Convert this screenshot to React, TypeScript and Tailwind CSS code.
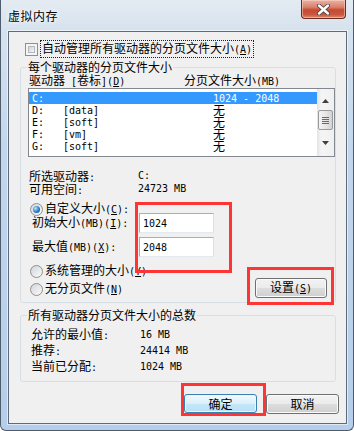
import React from "react";

// splits text into CJK / latin runs so latin gets the narrow mono look; "&X" = access key underline
function Txt({ s }: { s: string }) {
  const runs = s.match(/[\x00-\xff]+|[^\x00-\xff]+/g) ?? [];
  return (
    <>
      {runs.map((r, i) => {
        if (!/^[\x00-\xff]/.test(r)) return <span key={i}>{r}</span>;
        const bits = r.split(/&(.)/);
        return (
          <span key={i} className="font-['DejaVu_Sans_Mono',monospace] text-[10px]">
            {bits.map((b, j) =>
              j % 2 ? (
                <span key={j} className="underline underline-offset-[1px]">
                  {b}
                </span>
              ) : (
                b
              )
            )}
          </span>
        );
      })}
    </>
  );
}

function Checkbox() {
  return (
    <span className="box-border block h-[13px] w-[13px] shrink-0 border border-[#8f8f8f] bg-[#f4f4f4] p-[2px]">
      <span className="block h-full w-full border border-[#b4b9bf] bg-[linear-gradient(135deg,#cdd1d6,#f7f7f7)]" />
    </span>
  );
}

function Radio({ on }: { on?: boolean }) {
  return (
    <span className="box-border flex h-[13px] w-[13px] shrink-0 items-center justify-center rounded-full border border-[#8f8f8f] bg-[linear-gradient(135deg,#d2d4d8,#fbfbfb)]">
      {on && (
        <span className="block h-[7px] w-[7px] rounded-full bg-[radial-gradient(circle_at_35%_35%,#bfe4fc,#2b7cc6_55%,#0f4a8a)]" />
      )}
    </span>
  );
}

function Btn({ label, primary, w }: { label: string; primary?: boolean; w: string }) {
  return (
    <div
      className={
        primary
          ? `box-border flex h-[19px] ${w} items-center justify-center rounded-[3px] border border-[#3c7fb1] bg-[linear-gradient(to_bottom,#f1f9fe_0%,#dcf0fb_50%,#c6e6f8_51%,#b9e0f5_100%)] shadow-[inset_0_0_0_1px_#e9f6fe]`
          : `box-border flex h-[20px] ${w} items-center justify-center rounded-[3px] border border-[#707070] bg-[linear-gradient(to_bottom,#f2f2f2_0%,#ebebeb_50%,#dddddd_51%,#cfcfcf_100%)] shadow-[inset_0_0_0_1px_#fbfbfb]`
      }
    >
      <span className="leading-[14px]">
        <Txt s={label} />
      </span>
    </div>
  );
}

const drives = [
  { d: "C:", label: "", size: "1024 - 2048", sel: true },
  { d: "D:", label: "[data]", size: "无" },
  { d: "E:", label: "[soft]", size: "无" },
  { d: "F:", label: "[vm]", size: "无" },
  { d: "G:", label: "[soft]", size: "无" },
];

function DriveList() {
  return (
    <div className="ml-[7px] box-border flex h-[69px] w-[307px] border border-[#828790] bg-white">
      <div className="flex-1 pt-[3px]">
        {drives.map((r) => (
          <div
            key={r.d + r.label}
            className={`flex h-[12px] items-center pl-[3px] leading-[12px] ${r.sel ? "bg-[#3399ff] text-white" : ""}`}
          >
            <span className="w-[31px]">
              <Txt s={r.d} />
            </span>
            <span className="w-[150px]">
              <Txt s={r.label} />
            </span>
            <span>
              <Txt s={r.size} />
            </span>
          </div>
        ))}
      </div>
      <div className="flex w-[17px] flex-col items-center bg-[linear-gradient(to_right,#e3e3e3,#f5f5f5_25%,#f0f0f0)] pt-[10px]">
        <svg width="7" height="4" viewBox="0 0 7 4">
          <path d="M3.5 0 L7 4 L0 4 Z" fill="#404040" />
        </svg>
        <div className="mt-[7px] box-border flex h-[20px] w-[15px] flex-col items-center justify-center gap-[1px] rounded-[2px] border border-[#9a9a9a] bg-[linear-gradient(to_right,#f4f4f4,#e6e6e6_50%,#d4d4d4)]">
          <span className="block h-px w-[7px] bg-[#6a6a6a]" />
          <span className="block h-px w-[7px] bg-[#6a6a6a]" />
          <span className="block h-px w-[7px] bg-[#6a6a6a]" />
          <span className="block h-px w-[7px] bg-[#6a6a6a]" />
        </div>
        <svg className="mt-[11px]" width="7" height="4" viewBox="0 0 7 4">
          <path d="M0 0 L7 0 L3.5 4 Z" fill="#404040" />
        </svg>
      </div>
    </div>
  );
}

function SizeInput({ label, value }: { label: string; value: string }) {
  return (
    <div className="flex h-[20px] items-center pl-[11px]">
      <span className="w-[107px] leading-[14px]">
        <Txt s={label} />
      </span>
      <div className="box-border flex h-[20px] w-[75px] items-center border border-[#abadb3] border-r-[#dbdfe6] border-b-[#e3e9ef] bg-white pl-[3px]">
        <Txt s={value} />
      </div>
    </div>
  );
}

export default function App() {
  return (
    <div className="relative box-border h-[431px] w-[354px] overflow-hidden rounded-b-[6px] border-x border-b border-[#4e5c6b] bg-[linear-gradient(to_bottom,#e4ebf2_0%,#d6e2ee_7%,#c2d6ec_35%,#b5cee9_100%)] font-['Noto_Sans_CJK_SC',sans-serif] text-[12px] text-black">
      {/* title bar */}
      <div className="flex h-[31px] items-start justify-between">
        <div className="pl-[7px] pt-[8px] leading-[16px] tracking-[0.5px] [text-shadow:0_0_6px_#fff,0_0_3px_#fff]">
          虚拟内存
        </div>
        <div className="mr-[7px] box-border flex h-[19px] w-[45px] items-center justify-center rounded-b-[4px] border border-t-0 border-[#6d2a22] bg-[linear-gradient(to_bottom,#eab3a5_0%,#d9806c_40%,#c64a33_55%,#c8563c_80%,#dc8a6a_100%)] shadow-[inset_0_0_0_1px_rgba(255,220,210,0.5)]">
          <svg width="13" height="11" viewBox="0 0 13 11">
            <path d="M2 1.5 L11 9.5 M11 1.5 L2 9.5" stroke="#4a3a38" strokeWidth="4" strokeLinecap="round" />
            <path d="M2 1.5 L11 9.5 M11 1.5 L2 9.5" stroke="#ffffff" strokeWidth="2.4" strokeLinecap="round" />
          </svg>
        </div>
      </div>

      {/* client area */}
      <div className="ml-[7px] box-border h-[393px] w-[339px] border border-[#5d6b7a] bg-[#f0f0f0] shadow-[0_0_0_1px_rgba(255,255,255,0.55)]">
        <div className="mt-[9px] flex h-[16px] items-center pl-[16px]">
          <Checkbox />
          <span className="ml-[2px] border border-dotted border-[#202020] px-[1px] leading-[14px]">
            <Txt s="自动管理所有驱动器的分页文件大小(&A)" />
          </span>
        </div>

        <fieldset className="mt-[3px] ml-[11px] box-border w-[316px] rounded-[3px] border border-[#d5dfe5] pb-[4px]">
          <legend className="ml-[6px] px-[1px] leading-[14px]">每个驱动器的分页文件大小</legend>
          <div className="flex h-[14px] items-center pl-[8px] leading-[14px]">
            <span className="w-[155px]">
              <Txt s="驱动器 [卷标](&D)" />
            </span>
            <span>
              <Txt s="分页文件大小(MB)" />
            </span>
          </div>
          <DriveList />

          <div className="mt-[12px] pl-[8px] leading-[13px]">
            <div className="flex h-[13px]">
              <span className="w-[109px]">
                <Txt s="所选驱动器:" />
              </span>
              <Txt s="C:" />
            </div>
            <div className="flex h-[13px]">
              <span className="w-[109px]">
                <Txt s="可用空间:" />
              </span>
              <Txt s="24723 MB" />
            </div>
          </div>

          <div className="mt-[7px] flex h-[14px] items-center gap-[2px] pl-[9px] leading-[14px]">
            <Radio on />
            <span>
              <Txt s="自定义大小(&C):" />
            </span>
          </div>
          <div className="mt-[-3px]">
            <SizeInput label="初始大小(MB)(&I):" value="1024" />
          </div>
          <div className="mt-[4px]">
            <SizeInput label="最大值(MB)(&X):" value="2048" />
          </div>

          <div className="mt-[7px] flex items-end justify-between pr-[8px]">
            <div className="flex flex-col gap-[4px] pb-[2px] pl-[9px] leading-[14px]">
              <div className="flex h-[14px] items-center gap-[2px]">
                <Radio />
                <span>
                  <Txt s="系统管理的大小(&Y)" />
                </span>
              </div>
              <div className="flex h-[14px] items-center gap-[2px]">
                <Radio />
                <span>
                  <Txt s="无分页文件(&N)" />
                </span>
              </div>
            </div>
            <Btn label="设置(&S)" w="w-[72px]" />
          </div>
        </fieldset>

        <fieldset className="mt-[5px] ml-[11px] box-border w-[316px] rounded-[3px] border border-[#d5dfe5] pb-[6px]">
          <legend className="ml-[6px] px-[1px] leading-[14px]">所有驱动器分页文件大小的总数</legend>
          <div className="mt-[5px] pl-[10px] leading-[16px]">
            {[
              ["允许的最小值:", "16 MB"],
              ["推荐:", "24414 MB"],
              ["当前已分配:", "1024 MB"],
            ].map(([k, v]) => (
              <div key={k} className="flex h-[16px] items-center">
                <span className="w-[109px]">
                  <Txt s={k} />
                </span>
                <Txt s={v} />
              </div>
            ))}
          </div>
        </fieldset>

        <div className="mt-[12px] flex justify-end gap-[9px] pr-[7px]">
          <Btn label="确定" primary w="w-[73px]" />
          <Btn label="取消" w="w-[73px]" />
        </div>
      </div>

      {/* red annotation boxes */}
      <div className="absolute top-[202px] left-[134px] h-[71px] w-[97px] border-[3px] border-[#ff3434]" />
      <div className="absolute top-[267px] left-[246px] h-[38px] w-[87px] border-[3px] border-[#ff3434]" />
      <div className="absolute top-[383px] left-[180px] h-[33px] w-[85px] border-[3px] border-[#ff3434]" />
    </div>
  );
}
